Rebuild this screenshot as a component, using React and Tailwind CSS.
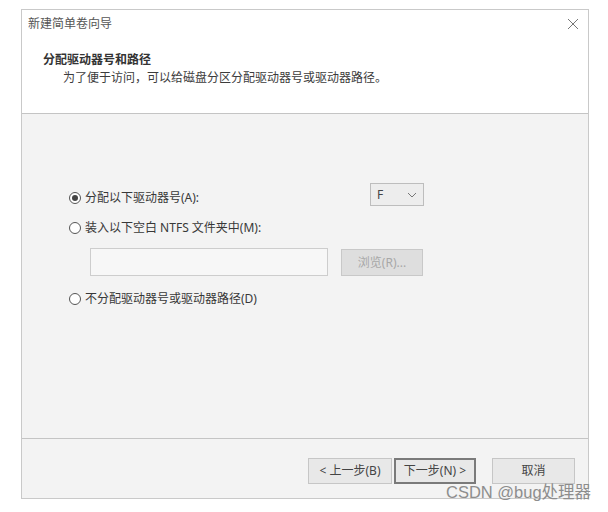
import React from "react";

const font = { fontFamily: '"Noto Sans", "Noto Sans CJK SC", sans-serif' };

function Radio({ checked, label }) {
  return (
    <div className="flex items-center h-[18px] text-[12px] text-[#383838]">
      <span className="w-[12px] h-[12px] rounded-full border border-[#555] bg-white flex items-center justify-center">
        {checked && <span className="w-[6px] h-[6px] rounded-full bg-[#444]" />}
      </span>
      <span className="ml-[4px] leading-[18px]">{label}</span>
    </div>
  );
}

export default function App() {
  return (
    <div className="relative w-[608px] h-[512px] bg-white pt-[9px] pl-[21px]" style={font}>
      {/* dialog */}
      <div className="w-[568px] h-[490px] border border-[#c9c9c9] flex flex-col">
        {/* header */}
        <div className="h-[104px] bg-white border-b border-[#c4c4c4] flex flex-col">
          <div className="h-[28px] flex items-center justify-between pl-[6px] pr-[9px]">
            <span className="text-[12px] text-[#555]">新建简单卷向导</span>
            <svg width="12" height="12" viewBox="0 0 12 12" className="text-[#777]">
              <path d="M1 1 L11 11 M11 1 L1 11" stroke="currentColor" strokeWidth="1" fill="none" />
            </svg>
          </div>
          <div className="mt-[13px] pl-[21px] text-[12px] font-bold leading-[18px] text-[#333]">分配驱动器号和路径</div>
          <div className="pl-[41px] text-[12px] leading-[18px] text-[#3c3c3c]">为了便于访问，可以给磁盘分区分配驱动器号或驱动器路径。</div>
        </div>

        {/* content */}
        <div className="flex-1 bg-[#f3f3f3] border-b border-[#c4c4c4] pt-[69px] pl-[47px]">
          <div className="flex h-[24px] items-end">
            <div className="w-[301px]">
              <Radio checked label="分配以下驱动器号(A):" />
            </div>
            <div className="self-start w-[54px] h-[23px] border border-[#bdbdbd] bg-[#ededed] flex items-center justify-between pl-[6px] pr-[6px] text-[12px] text-[#444]">
              <span>F</span>
              <svg width="10" height="6" viewBox="0 0 10 6" className="text-[#777]">
                <path d="M1 1 L5 5 L9 1" stroke="currentColor" strokeWidth="1" fill="none" />
              </svg>
            </div>
          </div>
          <div className="mt-[12px]">
            <Radio label="装入以下空白 NTFS 文件夹中(M):" />
          </div>
          <div className="mt-[11px] ml-[21px] flex items-start gap-[13px]">
            <div className="w-[238px] h-[28px] border border-[#cdcdcd] bg-[#f7f7f7]" />
            <div className="w-[82px] h-[27px] mt-[1px] border border-[#c8c8c8] bg-[#dedede] flex items-center justify-center text-[12px] text-[#a8a8a8]">
              浏览(R)...
            </div>
          </div>
          <div className="mt-[14px]">
            <Radio label="不分配驱动器号或驱动器路径(D)" />
          </div>
        </div>

        {/* footer */}
        <div className="h-[59px] bg-[#f3f3f3] flex justify-end items-start pt-[19px] pr-[13px] text-[12px] text-[#444]">
          <div className="w-[84px] h-[26px] border border-[#c6c6c6] bg-[#e8e8e8] flex items-center justify-center">&lt; 上一步(B)</div>
          <div className="ml-[2px] w-[82px] h-[26px] border-2 border-[#7a7a7a] bg-[#e8e8e8] flex items-center justify-center">下一步(N) &gt;</div>
          <div className="ml-[16px] w-[83px] h-[26px] border border-[#c6c6c6] bg-[#e8e8e8] flex items-center justify-center">取消</div>
        </div>
      </div>

      {/* watermark */}
      <div className="absolute left-[446px] top-[481px] text-[16.5px] leading-[22px] text-[#8d8d8d] whitespace-nowrap" style={{ fontFamily: '"Liberation Sans", "Noto Sans CJK SC", sans-serif' }}>
        CSDN @bug处理器
      </div>
    </div>
  );
}
